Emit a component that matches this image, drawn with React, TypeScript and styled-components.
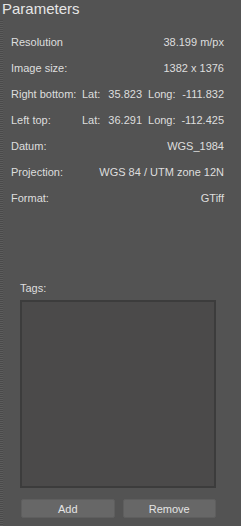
import React from "react";
import styled, { createGlobalStyle } from "styled-components";

const Global = createGlobalStyle`
  html, body { margin: 0; padding: 0; background: #535353; }
  body { font-family: "Liberation Sans", Arial, sans-serif; }
`;

const Panel = styled.div`
  position: relative;
  width: 241px;
  height: 526px;
  background: #535353;
  color: #dedede;
  display: flex;
  flex-direction: column;
  box-sizing: border-box;
  overflow: hidden;
`;

const Grip = styled.div`
  position: absolute;
  left: 0;
  top: 20px;
  bottom: 0;
  width: 3px;
  background: repeating-linear-gradient(
    to bottom,
    #4a4a4a 0px,
    #4a4a4a 1px,
    #5c5c5c 1px,
    #5c5c5c 2px
  );
`;

const Title = styled.div`
  height: 29px;
  font-size: 15px;
  line-height: 18px;
  padding-left: 2px;
  color: #e6e6e6;
  box-sizing: border-box;
`;

const Rows = styled.div`
  display: flex;
  flex-direction: column;
  padding: 0 17px 0 11px;
`;

const Row = styled.div`
  height: 26px;
  display: flex;
  align-items: center;
  font-size: 11px;
`;

const Label = styled.span<{ $w?: number }>`
  flex: ${(p) => (p.$w ? `0 0 ${p.$w}px` : "1 1 auto")};
  white-space: nowrap;
`;

const Value = styled.span`
  margin-left: auto;
  white-space: nowrap;
`;

const Coord = styled.div`
  flex: 1;
  display: flex;
  align-items: center;
  white-space: nowrap;
`;

const CoordKey = styled.span<{ $gap: number }>`
  margin-right: ${(p) => p.$gap}px;
`;

const CoordNum = styled.span<{ $right?: boolean }>`
  margin-left: ${(p) => (p.$right ? "auto" : "0")};
  margin-right: ${(p) => (p.$right ? "0" : "6px")};
`;

const TagsArea = styled.div`
  margin-top: auto;
  padding: 0 25px 8px 20px;
  display: flex;
  flex-direction: column;
`;

const TagsLabel = styled.div`
  font-size: 11px;
  line-height: 13px;
  margin-bottom: 5px;
`;

const TagBox = styled.div`
  height: 188px;
  background: #4b4a4a;
  border: 2px solid #3c3c3c;
  box-sizing: border-box;
`;

const Buttons = styled.div`
  display: grid;
  grid-template-columns: 1fr 1fr;
  gap: 8px;
  margin-top: 11px;
  padding: 0 0 0 1px;
`;

const Button = styled.button`
  height: 19px;
  padding: 0;
  border: 1px solid #5e5e5e;
  border-radius: 2px;
  background: #676767;
  color: #e4e4e4;
  font-family: "Liberation Sans", Arial, sans-serif;
  font-size: 11px;
`;

export default function App() {
  return (
    <>
      <Global />
      <Panel>
        <Grip />
        <Title>Parameters</Title>
        <Rows>
          <Row>
            <Label>Resolution</Label>
            <Value>38.199 m/px</Value>
          </Row>
          <Row>
            <Label>Image size:</Label>
            <Value>1382 x 1376</Value>
          </Row>
          <Row>
            <Label $w={71}>Right bottom:</Label>
            <Coord>
              <CoordKey $gap={8}>Lat:</CoordKey>
              <CoordNum>35.823</CoordNum>
              <CoordKey $gap={4}>Long:</CoordKey>
              <CoordNum $right>-111.832</CoordNum>
            </Coord>
          </Row>
          <Row>
            <Label $w={71}>Left top:</Label>
            <Coord>
              <CoordKey $gap={8}>Lat:</CoordKey>
              <CoordNum>36.291</CoordNum>
              <CoordKey $gap={4}>Long:</CoordKey>
              <CoordNum $right>-112.425</CoordNum>
            </Coord>
          </Row>
          <Row>
            <Label>Datum:</Label>
            <Value>WGS_1984</Value>
          </Row>
          <Row>
            <Label>Projection:</Label>
            <Value>WGS 84 / UTM zone 12N</Value>
          </Row>
          <Row>
            <Label>Format:</Label>
            <Value>GTiff</Value>
          </Row>
        </Rows>
        <TagsArea>
          <TagsLabel>Tags:</TagsLabel>
          <TagBox />
          <Buttons>
            <Button>Add</Button>
            <Button>Remove</Button>
          </Buttons>
        </TagsArea>
      </Panel>
    </>
  );
}
